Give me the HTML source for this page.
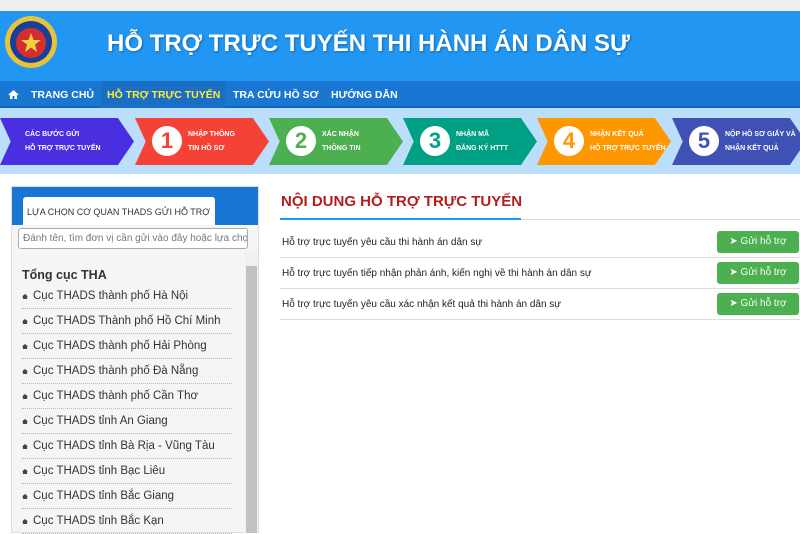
<!DOCTYPE html>
<html><head><meta charset="utf-8"><style>
*{margin:0;padding:0;box-sizing:border-box}
body{width:800px;height:533px;overflow:hidden;background:#fff;font-family:"Liberation Sans",Arial,sans-serif;position:relative}
.abs{position:absolute}
#top{left:0;top:0;width:800px;height:11px;background:#eeeeee}
#hdr{left:0;top:11px;width:800px;height:70px;background:#2196f3}
#hdr h1{position:absolute;left:107px;top:19px;color:#fff;font-size:24px;font-weight:bold;white-space:nowrap;text-shadow:1px 1px 2px rgba(0,0,0,.3)}
#nav{left:0;top:81px;width:800px;height:27px;background:#1976d2;border-bottom:2px solid #1565c0}
#nav span{position:absolute;top:8px;color:#fff;font-size:10.5px;font-weight:bold;white-space:nowrap}
#steps{left:0;top:108px;width:800px;height:66px;background:#bbdefb}
.st{position:absolute;top:10px;height:47px;clip-path:polygon(0 0,88% 0,100% 50%,88% 100%,0 100%,8% 50%)}
.st .n{position:absolute;left:17px;top:8px;width:30px;height:30px;border-radius:50%;background:#fff;font-size:22px;font-weight:bold;text-align:center;line-height:30px}
.st .t{position:absolute;left:53px;top:10px;color:#fff;font-size:7px;font-weight:bold;line-height:14px;white-space:nowrap}
#panel{left:11px;top:186px;width:248px;height:347px;background:#f5f5f5;border:1px solid #ddd}
#band{left:12px;top:187px;width:246px;height:38px;background:#1976d2}
#tab{left:23px;top:197px;width:192px;height:28px;background:#fff;border-radius:3px 3px 0 0;font-size:9px;color:#333;padding:10px 0 0 4px;white-space:nowrap;overflow:hidden}
#inp{left:18px;top:228px;width:230px;height:21px;background:#fff;border:1px solid #aaa;border-radius:3px;font-size:10px;color:#777;padding:4px 0 0 4px;white-space:nowrap;overflow:hidden}
#sb{left:245px;top:253px;width:13px;height:280px;background:#f0f0f0}
#thumb{left:246px;top:266px;width:11px;height:267px;background:#c1c1c1}
#list{left:22px;top:266px;width:210px}
#list .h{font-size:12.5px;font-weight:bold;color:#333;height:18px;padding-top:2px}
#list .i{height:25px;border-bottom:1px dotted #bbb;font-size:11.5px;color:#333;padding-top:6px;white-space:nowrap}
#list .i:before{content:"";display:inline-block;width:6px;height:5px;background:#444;margin-right:5px;clip-path:polygon(50% 0,100% 50%,85% 50%,85% 100%,15% 100%,15% 50%,0 50%)}
#title{left:281px;top:193px;font-size:15px;color:#b71c1c;font-weight:bold;white-space:nowrap}
#line{left:280px;top:219px;width:520px;height:1px;background:#ddd}
#bline{left:280px;top:218px;width:241px;height:2px;background:#2196f3}
.row{position:absolute;left:280px;width:520px;height:31px;border-bottom:1px solid #ddd;font-size:10px;color:#222}
.row span{position:absolute;left:2px;top:10px}
.btn{position:absolute;right:1px;top:4px;width:82px;height:22px;background:#4caf50;border-radius:3px;color:#fff;font-size:10px;text-align:center;line-height:22px}
</style></head><body>
<div id="top" class="abs"></div>
<div id="hdr" class="abs">
<svg style="position:absolute;left:4px;top:2px" width="54" height="58" viewBox="0 0 54 58"><circle cx="27" cy="29" r="26" fill="#e8c33a"/><circle cx="27" cy="29" r="21" fill="#1a3f9a"/><circle cx="27" cy="30" r="15" fill="#d32f2f"/><polygon points="27,20 29.5,27 37,27 31,31.5 33,39 27,34.5 21,39 23,31.5 17,27 24.5,27" fill="#f5d142"/></svg>
<h1>HỖ TRỢ TRỰC TUYẾN THI HÀNH ÁN DÂN SỰ</h1></div>
<div id="nav" class="abs">
<svg style="position:absolute;left:8px;top:9px" width="11" height="9" viewBox="0 0 11 9"><polygon points="5.5,0 11,5 9,5 9,9 6.5,9 6.5,6 4.5,6 4.5,9 2,9 2,5 0,5" fill="#fff"/></svg>
<span style="left:31px">TRANG CHỦ</span>
<div style="position:absolute;left:101px;top:0;width:124px;height:27px;background:#1a6fc4"></div>
<span style="left:107px;color:#ffeb3b">HỖ TRỢ TRỰC TUYẾN</span>
<span style="left:233px">TRA CỨU HỒ SƠ</span>
<span style="left:331px">HƯỚNG DẪN</span></div>
<div id="steps" class="abs">
<div class="st" style="left:0;width:134px;background:#4a2fe0"><div class="t" style="left:25px;top:10px">CÁC BƯỚC GỬI<br>HỖ TRỢ TRỰC TUYẾN</div></div>
<div class="st" style="left:135px;width:134px;background:#f44336"><div class="n" style="color:#f44336">1</div><div class="t">NHẬP THÔNG<br>TIN HỒ SƠ</div></div>
<div class="st" style="left:269px;width:134px;background:#4caf50"><div class="n" style="color:#4caf50">2</div><div class="t">XÁC NHẬN<br>THÔNG TIN</div></div>
<div class="st" style="left:403px;width:134px;background:#00a085"><div class="n" style="color:#00a085">3</div><div class="t">NHẬN MÃ<br>ĐĂNG KÝ HTTT</div></div>
<div class="st" style="left:537px;width:134px;background:#ff9800"><div class="n" style="color:#ff9800">4</div><div class="t">NHẬN KẾT QUẢ<br>HỖ TRỢ TRỰC TUYẾN</div></div>
<div class="st" style="left:672px;width:134px;background:#3f51b5"><div class="n" style="color:#3f51b5">5</div><div class="t">NỘP HỒ SƠ GIẤY VÀ<br>NHẬN KẾT QUẢ</div></div>
</div>
<div id="panel" class="abs"></div>
<div id="band" class="abs"></div>
<div id="tab" class="abs">LỰA CHỌN CƠ QUAN THADS GỬI HỖ TRỢ</div>
<div id="inp" class="abs">Đánh tên, tìm đơn vị cần gửi vào đây hoặc lựa chọn</div>
<div id="sb" class="abs"></div><div id="thumb" class="abs"></div>
<div id="list" class="abs">
<div class="h">Tổng cục THA</div>
<div class="i">Cục THADS thành phố Hà Nội</div>
<div class="i">Cục THADS Thành phố Hồ Chí Minh</div>
<div class="i">Cục THADS thành phố Hải Phòng</div>
<div class="i">Cục THADS thành phố Đà Nẵng</div>
<div class="i">Cục THADS thành phố Cần Thơ</div>
<div class="i">Cục THADS tỉnh An Giang</div>
<div class="i">Cục THADS tỉnh Bà Rịa - Vũng Tàu</div>
<div class="i">Cục THADS tỉnh Bạc Liêu</div>
<div class="i">Cục THADS tỉnh Bắc Giang</div>
<div class="i">Cục THADS tỉnh Bắc Kạn</div>
</div>
<div id="title" class="abs">NỘI DUNG HỖ TRỢ TRỰC TUYẾN</div>
<div id="line" class="abs"></div><div id="bline" class="abs"></div>
<div class="row" style="top:227px"><span>Hỗ trợ trực tuyến yêu cầu thi hành án dân sự</span><div class="btn">➤ Gửi hỗ trợ</div></div>
<div class="row" style="top:258px"><span>Hỗ trợ trực tuyến tiếp nhận phản ánh, kiến nghị về thi hành án dân sự</span><div class="btn">➤ Gửi hỗ trợ</div></div>
<div class="row" style="top:289px"><span>Hỗ trợ trực tuyến yêu cầu xác nhận kết quả thi hành án dân sự</span><div class="btn">➤ Gửi hỗ trợ</div></div>
</body></html>
